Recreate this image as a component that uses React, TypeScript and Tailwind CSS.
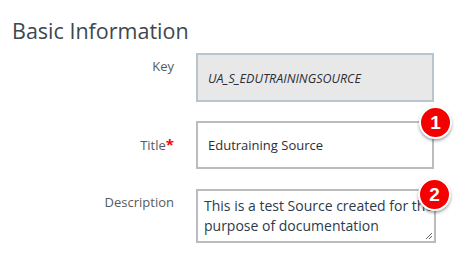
import React from "react";

function Badge({ n, className }: { n: number; className: string }) {
  return (
    <div
      className={`absolute w-[33px] h-[33px] rounded-full bg-[#f50000] border-2 border-white shadow-[0_2px_3px_rgba(0,0,0,0.35)] flex items-center justify-center text-white font-bold text-[19px] leading-none ${className}`}
      style={{ fontFamily: "'Liberation Sans', Arial, sans-serif" }}
    >
      {n}
    </div>
  );
}

export default function App() {
  return (
    <div
      className="relative w-[465px] h-[261px] bg-white overflow-hidden text-[#555b61]"
      style={{ fontFamily: "'Open Sans', sans-serif" }}
    >
      <h1 className="pl-[12px] pt-[16px] text-[21.5px] leading-[29px] text-[#3d4750] font-normal">
        Basic Information
      </h1>
      <div className="mt-[8px] flex flex-col">
        <div className="flex">
          <div className="w-[174px] text-right text-[13px] pt-[4px] leading-[18px]">Key</div>
          <div className="ml-[22px] w-[238px] h-[49px] border-2 border-[#b9c5ce] bg-[#e8e8e8] flex items-center pl-[10px] pt-[4px] italic text-[12.5px] text-[#2d2d35]">
            UA_S_EDUTRAININGSOURCE
          </div>
        </div>
        <div className="flex mt-[19px]">
          <div className="w-[174px] text-right text-[13px] pt-[14px] leading-[18px]">
            Title<span className="text-[#ff0000] font-bold text-[15px]">*</span>
          </div>
          <div className="ml-[22px] w-[238px] h-[48px] border-2 border-[#babcbf] bg-white flex items-center pl-[10px] pt-[2px] text-[13px] text-[#2d2d35]">
            Edutraining Source
          </div>
        </div>
        <div className="flex mt-[20px]">
          <div className="w-[174px] text-right text-[13px] pt-[4px] leading-[18px]">Description</div>
          <div className="relative ml-[22px] w-[240px] h-[54px] border-2 border-[#babcbf] bg-white pl-[6px] pt-[5px] text-[14px] leading-[20px] text-[#2d3a4a] overflow-hidden whitespace-nowrap">
            This is a test Source created for the
            <br />
            purpose of documentation
            <svg className="absolute right-[1px] bottom-[1px]" width="8" height="8" viewBox="0 0 8 8">
              <line x1="1" y1="7" x2="7" y2="1" stroke="#666" strokeWidth="1" />
              <line x1="4" y1="7" x2="7" y2="4" stroke="#666" strokeWidth="1" />
            </svg>
          </div>
        </div>
      </div>
      <Badge n={1} className="left-[419px] top-[106px]" />
      <Badge n={2} className="left-[418px] top-[178px]" />
    </div>
  );
}
